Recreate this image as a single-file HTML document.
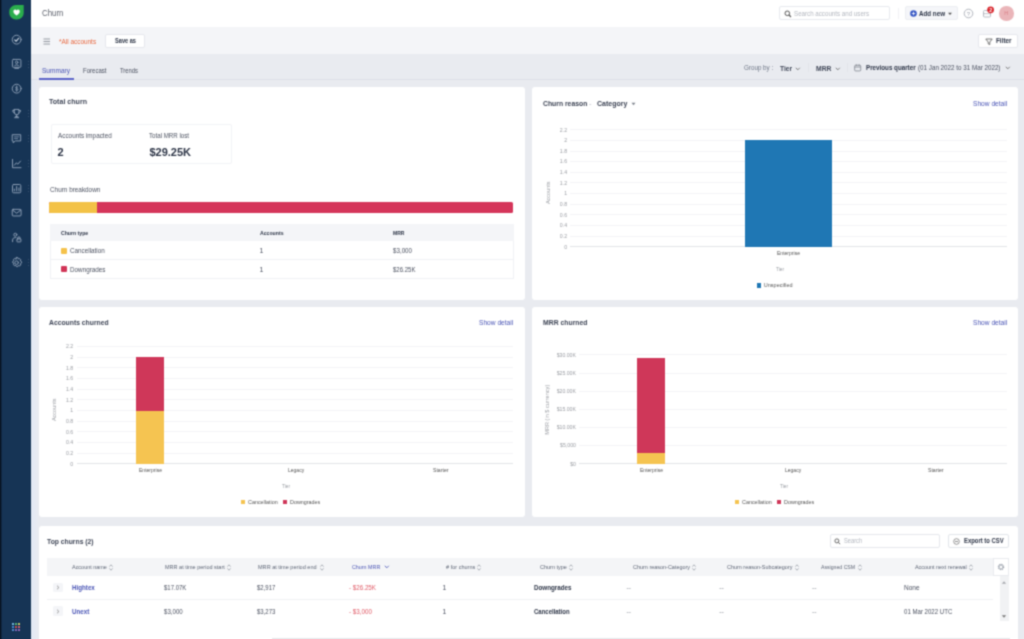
<!DOCTYPE html>
<html><head><meta charset="utf-8">
<style>
*{box-sizing:border-box;margin:0;padding:0}
html,body{width:1024px;height:639px;overflow:hidden;background:#e9ebf0;font-family:"Liberation Sans",sans-serif;color:#2b3345}
.a{position:absolute}
.t{position:absolute;white-space:nowrap;line-height:1;transform-origin:0 50%}
svg{overflow:visible}
body{filter:url(#bl)}
</style></head><body>
<svg width="0" height="0" style="position:absolute"><filter id="bl" x="0" y="0" width="100%" height="100%" color-interpolation-filters="sRGB"><feConvolveMatrix order="3" kernelMatrix="0.0408 0.1204 0.0408 0.1204 0.3550 0.1204 0.0408 0.1204 0.0408" edgeMode="duplicate" preserveAlpha="true"/></filter></svg>
<div class="a" style="left:0px;top:0px;width:31.3px;height:639px;background:#163455;"></div>
<div class="a" style="left:0px;top:0px;width:2px;height:639px;background:linear-gradient(90deg,#050d18,#0b1c30 60%,#173558);"></div>
<div class="a" style="left:31.3px;top:0px;width:993px;height:27px;background:#fff;"></div>
<div class="a" style="left:31.3px;top:27px;width:993px;height:27px;background:#f4f5f8;"></div>
<div class="a" style="left:31.3px;top:79px;width:993px;height:1px;background:#dde0e7;"></div>
<div class="a" style="left:31.3px;top:80px;width:7.2px;height:559px;background:linear-gradient(90deg,#e2e9f5,#e9ebf1);"></div>
<div class="a" style="left:38.5px;top:87px;width:486px;height:212.7px;background:#fff;border-radius:3px;"></div>
<div class="a" style="left:532px;top:87px;width:486px;height:212.7px;background:#fff;border-radius:3px;"></div>
<div class="a" style="left:38.5px;top:307px;width:486px;height:209.8px;background:#fff;border-radius:3px;"></div>
<div class="a" style="left:532px;top:307px;width:486px;height:209.8px;background:#fff;border-radius:3px;"></div>
<div class="a" style="left:38.5px;top:525.7px;width:979.5px;height:120px;background:#fff;border-radius:3px;"></div>
<div class="t" style="left:42.00px;top:9.00px;font-size:8.5px;color:#5a5f6a;transform:scaleX(0.9243);">Churn</div>
<div class="a" style="left:778.7px;top:6.2px;width:111.6px;height:14.1px;background:#fff;border:1px solid #e8eaef;border-radius:2px;"></div>
<svg class="a" style="left:783.5px;top:9.5px" width="8" height="8" viewBox="0 0 8 8"><circle cx="3.3" cy="3.3" r="2.3" fill="none" stroke="#555" stroke-width="1"/><path d="M5 5 L7 7" stroke="#555" stroke-width="1.1"/></svg>
<div class="t" style="left:793.50px;top:11.00px;font-size:6.5px;color:#b3b7bf;transform:scaleX(0.9521);">Search accounts and users</div>
<div class="a" style="left:897.5px;top:8px;width:1px;height:11px;background:#f1f2f5;"></div>
<div class="a" style="left:905px;top:6.2px;width:52.8px;height:14.1px;background:#f5f6f9;border:1px solid #eceef2;border-radius:2px;"></div>
<svg class="a" style="left:909.5px;top:9.6px" width="7" height="7" viewBox="0 0 7 7"><circle cx="3.5" cy="3.5" r="3.3" fill="#3556c4"/><path d="M3.5 1.8v3.4M1.8 3.5h3.4" stroke="#fff" stroke-width=".8"/></svg>
<div class="t" style="left:919.00px;top:11.00px;font-size:6.8px;color:#2b3345;font-weight:bold;transform:scaleX(0.9177);">Add new</div>
<svg class="a" style="left:947px;top:11.5px" width="6" height="4" viewBox="0 0 6 4"><path d="M1 .8L3 3 5 .8z" fill="#555"/></svg>
<svg class="a" style="left:963px;top:7.5px" width="11" height="11" viewBox="0 0 11 11"><circle cx="5.5" cy="5.5" r="4.3" fill="none" stroke="#9ea3ad" stroke-width=".8"/><text x="5.5" y="7.7" font-size="6" text-anchor="middle" fill="#9ea3ad" font-family="Liberation Sans">?</text></svg>
<svg class="a" style="left:981px;top:5px" width="16" height="16" viewBox="0 0 16 16"><rect x="2.5" y="5.5" width="7" height="6.5" rx="1" fill="none" stroke="#a4a9b2" stroke-width=".8"/><path d="M2.5 8.7h7" stroke="#a4a9b2" stroke-width=".7"/><circle cx="9.6" cy="4.8" r="3.4" fill="#d8232a"/><text x="9.6" y="6.8" font-size="5" font-weight="bold" text-anchor="middle" fill="#fff" font-family="Liberation Sans">2</text></svg>
<div class="a" style="left:999px;top:6px;width:14.5px;height:14.5px;background:#eab5b9;border-radius:50%;"></div>
<div class="t" style="left:1004.21px;top:11.00px;font-size:5.5px;color:#d98088;">H</div>
<svg class="a" style="left:43px;top:37.5px" width="8" height="7" viewBox="0 0 8 7"><path d="M.5 1h6.5M.5 3.5h6.5M.5 6h6.5" stroke="#7b808a" stroke-width=".8"/></svg>
<div class="t" style="left:59.10px;top:39.00px;font-size:6.8px;color:#e8683f;transform:scaleX(0.9438);">*All accounts</div>
<div class="a" style="left:104.5px;top:33.6px;width:40.7px;height:14.1px;background:#fff;border:1px solid #e6e8ed;border-radius:2px;"></div>
<div class="t" style="left:115.10px;top:38.00px;font-size:6.8px;color:#2b3345;font-weight:bold;transform:scaleX(0.8289);">Save as</div>
<div class="a" style="left:978px;top:33.6px;width:39.6px;height:14.1px;background:#fff;border:1px solid #e6e8ed;border-radius:2px;"></div>
<svg class="a" style="left:984.5px;top:37.5px" width="8" height="8" viewBox="0 0 8 8"><path d="M.8 1h6.4L4.8 4v2.6L3.2 5.8V4z" fill="none" stroke="#555" stroke-width=".8" stroke-linejoin="round"/></svg>
<div class="t" style="left:996.00px;top:38.00px;font-size:6.8px;color:#2b3345;font-weight:bold;transform:scaleX(0.9323);">Filter</div>
<div class="t" style="left:42.00px;top:67.00px;font-size:7px;color:#4a55b5;transform:scaleX(0.9349);">Summary</div>
<div class="t" style="left:82.80px;top:67.00px;font-size:7px;color:#4b5160;transform:scaleX(0.8630);">Forecast</div>
<div class="t" style="left:119.80px;top:67.00px;font-size:7px;color:#4b5160;transform:scaleX(0.8362);">Trends</div>
<div class="a" style="left:38.5px;top:78px;width:35px;height:2px;background:#5a63c8;"></div>
<div class="t" style="left:743.80px;top:64.00px;font-size:7px;color:#6f7787;transform:scaleX(0.8934);">Group by :</div>
<div class="t" style="left:780.20px;top:65.00px;font-size:7.5px;color:#3f4657;font-weight:bold;transform:scaleX(0.8884);">Tier</div>
<svg class="a" style="left:795.3px;top:66.5px" width="5.600" height="4" viewBox="0 0 7 5"><path d="M1 1l2.500 2.500L6 1" fill="none" stroke="#666" stroke-width="1.100"/></svg>
<div class="a" style="left:808px;top:63px;width:1px;height:9px;background:#e2e5ea;"></div>
<div class="t" style="left:815.60px;top:65.00px;font-size:7.5px;color:#3f4657;font-weight:bold;transform:scaleX(0.9016);">MRR</div>
<svg class="a" style="left:834.6px;top:66.5px" width="5.600" height="4" viewBox="0 0 7 5"><path d="M1 1l2.500 2.500L6 1" fill="none" stroke="#666" stroke-width="1.100"/></svg>
<div class="a" style="left:847px;top:63px;width:1px;height:9px;background:#e2e5ea;"></div>
<svg class="a" style="left:854px;top:64px" width="7.600" height="7.600" viewBox="0 0 8 8"><rect x=".7" y="1.3" width="6.4" height="6" rx="1" fill="none" stroke="#7b808a" stroke-width=".8"/><path d="M.7 3.2h6.4M2.4 .4v1.6M5.4 .4v1.6" stroke="#7b808a" stroke-width=".8"/></svg>
<div class="t" style="left:866.40px;top:65.00px;font-size:6.8px;color:#2b3345;font-weight:bold;transform:scaleX(0.9178);">Previous quarter</div>
<div class="t" style="left:918.00px;top:65.00px;font-size:6.8px;color:#4b5160;transform:scaleX(0.9208);">(01 Jan 2022 to 31 Mar 2022)</div>
<svg class="a" style="left:1004.5px;top:66px" width="5.600" height="4" viewBox="0 0 7 5"><path d="M1 1l2.500 2.500L6 1" fill="none" stroke="#666" stroke-width="1.100"/></svg>
<div class="t" style="left:49.10px;top:98.00px;font-size:7.5px;color:#3d4455;font-weight:bold;transform:scaleX(0.9435);">Total churn</div>
<div class="a" style="left:50.7px;top:124px;width:181.7px;height:39.7px;border:1px solid #f2f3f6;border-radius:2px;"></div>
<div class="t" style="left:57.50px;top:132.00px;font-size:7px;color:#4b5160;transform:scaleX(0.9080);">Accounts impacted</div>
<div class="t" style="left:57.50px;top:147.00px;font-size:11px;color:#2b3345;font-weight:bold;">2</div>
<div class="t" style="left:149.40px;top:132.00px;font-size:7px;color:#4b5160;transform:scaleX(0.8789);">Total MRR lost</div>
<div class="t" style="left:149.40px;top:147.00px;font-size:11px;color:#2b3345;font-weight:bold;">$29.25K</div>
<div class="t" style="left:49.70px;top:186.00px;font-size:7px;color:#4b5160;transform:scaleX(0.9103);">Churn breakdown</div>
<div class="a" style="left:49.2px;top:201.5px;width:464.3px;height:11px;background:#d5355a;border-radius:1.5px;"></div>
<div class="a" style="left:49.2px;top:201.5px;width:47.6px;height:11px;background:#f3c246;border-radius:1.5px 0 0 1.5px;"></div>
<div class="a" style="left:49.5px;top:224.2px;width:464px;height:55px;border:1px solid #f0f1f5;"></div>
<div class="a" style="left:49.5px;top:224.2px;width:464px;height:17.1px;background:#f4f5f8;"></div>
<div class="t" style="left:61.00px;top:230.00px;font-size:6px;color:#2b3345;font-weight:bold;transform:scaleX(0.8589);">Churn type</div>
<div class="t" style="left:259.50px;top:230.00px;font-size:6px;color:#2b3345;font-weight:bold;transform:scaleX(0.8596);">Accounts</div>
<div class="t" style="left:392.70px;top:230.00px;font-size:6px;color:#2b3345;font-weight:bold;transform:scaleX(0.8416);">MRR</div>
<div class="a" style="left:49.5px;top:259.3px;width:464px;height:1px;background:#f0f1f5;"></div>
<div class="a" style="left:60.6px;top:247.5px;width:6px;height:6px;background:#f5c24b;border-radius:1px;"></div>
<div class="t" style="left:70.20px;top:247.00px;font-size:7px;color:#4b5160;transform:scaleX(0.9007);">Cancellation</div>
<div class="t" style="left:259.50px;top:247.00px;font-size:7px;color:#4b5160;">1</div>
<div class="t" style="left:392.70px;top:247.00px;font-size:7px;color:#4b5160;transform:scaleX(0.8874);">$3,000</div>
<div class="a" style="left:60.6px;top:266.3px;width:6px;height:6px;background:#d13557;border-radius:1px;"></div>
<div class="t" style="left:70.20px;top:266.00px;font-size:7px;color:#4b5160;transform:scaleX(0.9033);">Downgrades</div>
<div class="t" style="left:259.50px;top:266.00px;font-size:7px;color:#4b5160;">1</div>
<div class="t" style="left:392.70px;top:266.00px;font-size:7px;color:#4b5160;transform:scaleX(0.8627);">$26.25K</div>
<div class="t" style="left:542.60px;top:100.00px;font-size:7.5px;color:#3a4152;font-weight:bold;transform:scaleX(0.9086);">Churn reason</div>
<div class="t" style="left:589.00px;top:100.00px;font-size:7.5px;color:#b5b9c2;">-</div>
<div class="t" style="left:597.20px;top:100.00px;font-size:7.5px;color:#3a4152;font-weight:bold;transform:scaleX(0.9320);">Category</div>
<svg class="a" style="left:631px;top:102px" width="5" height="4" viewBox="0 0 5 4"><path d="M.5 .8L2.500 3.200 4.500 .8z" fill="#7b808a"/></svg>
<div class="t" style="left:973.20px;top:100.00px;font-size:7px;color:#4a55b5;transform:scaleX(0.9450);">Show detail</div>
<div class="a" style="left:570.4px;top:246.2px;width:437.0px;height:1px;background:#e2e4e8;"></div>
<div class="t" style="left:564.21px;top:245.00px;font-size:5.2px;color:#9a9da3;">0</div>
<div class="a" style="left:570.4px;top:235.6px;width:437.0px;height:1px;background:#f4f4f6;"></div>
<div class="t" style="left:559.87px;top:234.00px;font-size:5.2px;color:#9a9da3;">0.2</div>
<div class="a" style="left:570.4px;top:224.9px;width:437.0px;height:1px;background:#f4f4f6;"></div>
<div class="t" style="left:559.87px;top:223.00px;font-size:5.2px;color:#9a9da3;">0.4</div>
<div class="a" style="left:570.4px;top:214.3px;width:437.0px;height:1px;background:#f4f4f6;"></div>
<div class="t" style="left:559.87px;top:213.00px;font-size:5.2px;color:#9a9da3;">0.6</div>
<div class="a" style="left:570.4px;top:203.7px;width:437.0px;height:1px;background:#f4f4f6;"></div>
<div class="t" style="left:559.87px;top:202.00px;font-size:5.2px;color:#9a9da3;">0.8</div>
<div class="a" style="left:570.4px;top:193.0px;width:437.0px;height:1px;background:#f4f4f6;"></div>
<div class="t" style="left:564.21px;top:191.00px;font-size:5.2px;color:#9a9da3;">1</div>
<div class="a" style="left:570.4px;top:182.4px;width:437.0px;height:1px;background:#f4f4f6;"></div>
<div class="t" style="left:559.87px;top:181.00px;font-size:5.2px;color:#9a9da3;">1.2</div>
<div class="a" style="left:570.4px;top:171.7px;width:437.0px;height:1px;background:#f4f4f6;"></div>
<div class="t" style="left:559.87px;top:170.00px;font-size:5.2px;color:#9a9da3;">1.4</div>
<div class="a" style="left:570.4px;top:161.1px;width:437.0px;height:1px;background:#f4f4f6;"></div>
<div class="t" style="left:559.87px;top:159.00px;font-size:5.2px;color:#9a9da3;">1.6</div>
<div class="a" style="left:570.4px;top:150.5px;width:437.0px;height:1px;background:#f4f4f6;"></div>
<div class="t" style="left:559.87px;top:149.00px;font-size:5.2px;color:#9a9da3;">1.8</div>
<div class="a" style="left:570.4px;top:139.8px;width:437.0px;height:1px;background:#f4f4f6;"></div>
<div class="t" style="left:564.21px;top:138.00px;font-size:5.2px;color:#9a9da3;">2</div>
<div class="a" style="left:570.4px;top:129.2px;width:437.0px;height:1px;background:#f4f4f6;"></div>
<div class="t" style="left:559.87px;top:128.00px;font-size:5.2px;color:#9a9da3;">2.2</div>
<div class="t" style="left:537.49px;top:189.95px;font-size:5.5px;color:#9a9da3;transform:rotate(-90deg) scaleX(1.003);transform-origin:50% 50%">Accounts</div>
<div class="a" style="left:745.3px;top:140.3px;width:86.7px;height:106.4px;background:#1f77b4;"></div>
<div class="t" style="left:777.00px;top:251.00px;font-size:5.2px;color:#555;transform:scaleX(0.9704);">Enterprise</div>
<div class="t" style="left:775.75px;top:267.00px;font-size:5.2px;color:#9a9da3;transform:scaleX(0.9244);">Tier</div>
<div class="a" style="left:756.6px;top:283px;width:4.5px;height:4.5px;background:#1f77b4;"></div>
<div class="t" style="left:763.80px;top:283.00px;font-size:5.5px;color:#555;">Unspecified</div>
<div class="t" style="left:49.10px;top:319.00px;font-size:7.5px;color:#3d4455;font-weight:bold;transform:scaleX(0.9052);">Accounts churned</div>
<div class="t" style="left:479.20px;top:319.00px;font-size:7px;color:#4a55b5;transform:scaleX(0.9450);">Show detail</div>
<div class="a" style="left:77px;top:463.2px;width:436.4px;height:1px;background:#e2e4e8;"></div>
<div class="t" style="left:70.31px;top:462.00px;font-size:5.2px;color:#9a9da3;">0</div>
<div class="a" style="left:77px;top:452.6px;width:436.4px;height:1px;background:#f4f4f6;"></div>
<div class="t" style="left:65.97px;top:451.00px;font-size:5.2px;color:#9a9da3;">0.2</div>
<div class="a" style="left:77px;top:441.9px;width:436.4px;height:1px;background:#f4f4f6;"></div>
<div class="t" style="left:65.97px;top:440.00px;font-size:5.2px;color:#9a9da3;">0.4</div>
<div class="a" style="left:77px;top:431.3px;width:436.4px;height:1px;background:#f4f4f6;"></div>
<div class="t" style="left:65.97px;top:430.00px;font-size:5.2px;color:#9a9da3;">0.6</div>
<div class="a" style="left:77px;top:420.6px;width:436.4px;height:1px;background:#f4f4f6;"></div>
<div class="t" style="left:65.97px;top:419.00px;font-size:5.2px;color:#9a9da3;">0.8</div>
<div class="a" style="left:77px;top:410.0px;width:436.4px;height:1px;background:#f4f4f6;"></div>
<div class="t" style="left:70.31px;top:408.00px;font-size:5.2px;color:#9a9da3;">1</div>
<div class="a" style="left:77px;top:399.3px;width:436.4px;height:1px;background:#f4f4f6;"></div>
<div class="t" style="left:65.97px;top:398.00px;font-size:5.2px;color:#9a9da3;">1.2</div>
<div class="a" style="left:77px;top:388.7px;width:436.4px;height:1px;background:#f4f4f6;"></div>
<div class="t" style="left:65.97px;top:387.00px;font-size:5.2px;color:#9a9da3;">1.4</div>
<div class="a" style="left:77px;top:378.0px;width:436.4px;height:1px;background:#f4f4f6;"></div>
<div class="t" style="left:65.97px;top:376.00px;font-size:5.2px;color:#9a9da3;">1.6</div>
<div class="a" style="left:77px;top:367.4px;width:436.4px;height:1px;background:#f4f4f6;"></div>
<div class="t" style="left:65.97px;top:366.00px;font-size:5.2px;color:#9a9da3;">1.8</div>
<div class="a" style="left:77px;top:356.7px;width:436.4px;height:1px;background:#f4f4f6;"></div>
<div class="t" style="left:70.31px;top:355.00px;font-size:5.2px;color:#9a9da3;">2</div>
<div class="a" style="left:77px;top:346.1px;width:436.4px;height:1px;background:#f4f4f6;"></div>
<div class="t" style="left:65.97px;top:344.00px;font-size:5.2px;color:#9a9da3;">2.2</div>
<div class="t" style="left:43.29px;top:406.90px;font-size:5.5px;color:#9a9da3;transform:rotate(-90deg) scaleX(1.003);transform-origin:50% 50%">Accounts</div>
<div class="a" style="left:135.9px;top:357.3px;width:28.5px;height:53.3px;background:#cf3759;"></div>
<div class="a" style="left:135.9px;top:410.6px;width:28.5px;height:53.1px;background:#f5c451;"></div>
<div class="t" style="left:138.80px;top:468.00px;font-size:5.2px;color:#555;transform:scaleX(0.9704);">Enterprise</div>
<div class="t" style="left:287.80px;top:468.00px;font-size:5.2px;color:#555;transform:scaleX(0.9661);">Legacy</div>
<div class="t" style="left:433.25px;top:468.00px;font-size:5.2px;color:#555;transform:scaleX(0.9932);">Starter</div>
<div class="t" style="left:282.05px;top:484.00px;font-size:5.2px;color:#9a9da3;transform:scaleX(0.9244);">Tier</div>
<div class="a" style="left:241px;top:500px;width:4.4px;height:4.4px;background:#f5c451;"></div>
<div class="t" style="left:248.40px;top:500.00px;font-size:5.5px;color:#555;transform:scaleX(0.9812);">Cancellation</div>
<div class="a" style="left:282.8px;top:500px;width:4.4px;height:4.4px;background:#cf3759;"></div>
<div class="t" style="left:290.00px;top:500.00px;font-size:5.5px;color:#555;transform:scaleX(0.9812);">Downgrades</div>
<div class="t" style="left:543.20px;top:319.00px;font-size:7.5px;color:#3d4455;font-weight:bold;transform:scaleX(0.9128);">MRR churned</div>
<div class="t" style="left:973.20px;top:319.00px;font-size:7px;color:#4a55b5;transform:scaleX(0.9450);">Show detail</div>
<div class="a" style="left:579px;top:463.2px;width:428.4px;height:1px;background:#e2e4e8;"></div>
<div class="t" style="left:570.22px;top:462.00px;font-size:5.2px;color:#9a9da3;">$0</div>
<div class="a" style="left:579px;top:445.1px;width:428.4px;height:1px;background:#f4f4f6;"></div>
<div class="t" style="left:560.09px;top:443.00px;font-size:5.2px;color:#9a9da3;">$5,000</div>
<div class="a" style="left:579px;top:426.9px;width:428.4px;height:1px;background:#f4f4f6;"></div>
<div class="t" style="left:556.63px;top:425.00px;font-size:5.2px;color:#9a9da3;">$10.00K</div>
<div class="a" style="left:579px;top:408.8px;width:428.4px;height:1px;background:#f4f4f6;"></div>
<div class="t" style="left:556.63px;top:407.00px;font-size:5.2px;color:#9a9da3;">$15.00K</div>
<div class="a" style="left:579px;top:390.7px;width:428.4px;height:1px;background:#f4f4f6;"></div>
<div class="t" style="left:556.63px;top:389.00px;font-size:5.2px;color:#9a9da3;">$20.00K</div>
<div class="a" style="left:579px;top:372.6px;width:428.4px;height:1px;background:#f4f4f6;"></div>
<div class="t" style="left:556.63px;top:371.00px;font-size:5.2px;color:#9a9da3;">$25.00K</div>
<div class="a" style="left:579px;top:354.4px;width:428.4px;height:1px;background:#f4f4f6;"></div>
<div class="t" style="left:556.63px;top:353.00px;font-size:5.2px;color:#9a9da3;">$30.00K</div>
<div class="t" style="left:522.60px;top:406.75px;font-size:5.5px;color:#9a9da3;transform:rotate(-90deg) scaleX(1.016);transform-origin:50% 50%">MRR (in $ currency)</div>
<div class="a" style="left:637px;top:357.7px;width:27.9px;height:95.1px;background:#cf3759;"></div>
<div class="a" style="left:637px;top:452.8px;width:27.9px;height:10.9px;background:#f5c451;"></div>
<div class="t" style="left:639.50px;top:468.00px;font-size:5.2px;color:#555;transform:scaleX(0.9704);">Enterprise</div>
<div class="t" style="left:784.90px;top:468.00px;font-size:5.2px;color:#555;transform:scaleX(0.9661);">Legacy</div>
<div class="t" style="left:927.85px;top:468.00px;font-size:5.2px;color:#555;transform:scaleX(0.9932);">Starter</div>
<div class="t" style="left:780.05px;top:484.00px;font-size:5.2px;color:#9a9da3;transform:scaleX(0.9244);">Tier</div>
<div class="a" style="left:734.6px;top:500px;width:4.4px;height:4.4px;background:#f5c451;"></div>
<div class="t" style="left:742.30px;top:500.00px;font-size:5.5px;color:#555;transform:scaleX(0.9812);">Cancellation</div>
<div class="a" style="left:776.6px;top:500px;width:4.4px;height:4.4px;background:#cf3759;"></div>
<div class="t" style="left:783.80px;top:500.00px;font-size:5.5px;color:#555;transform:scaleX(0.9812);">Downgrades</div>
<div class="t" style="left:46.50px;top:538.00px;font-size:7.5px;color:#3d4455;font-weight:bold;transform:scaleX(0.9044);">Top churns (2)</div>
<div class="a" style="left:829.7px;top:534px;width:110.3px;height:14px;background:#fff;border:1px solid #e5e8ed;border-radius:2px;"></div>
<svg class="a" style="left:834px;top:537.5px" width="7" height="7" viewBox="0 0 8 8"><circle cx="3.3" cy="3.3" r="2.3" fill="none" stroke="#555" stroke-width="1"/><path d="M5 5 L7 7" stroke="#555" stroke-width="1.1"/></svg>
<div class="t" style="left:844.30px;top:538.00px;font-size:6.5px;color:#b3b7bf;transform:scaleX(0.8788);">Search</div>
<div class="a" style="left:948px;top:534px;width:60.7px;height:14px;background:#fff;border:1px solid #e3e6eb;border-radius:2px;"></div>
<svg class="a" style="left:952.5px;top:537.5px" width="7" height="7" viewBox="0 0 7 7"><circle cx="3.5" cy="3.5" r="2.8" fill="none" stroke="#777" stroke-width=".8"/><path d="M2 3.5h3" stroke="#777" stroke-width=".8"/></svg>
<div class="t" style="left:964.40px;top:538.00px;font-size:6.8px;color:#2b3345;font-weight:bold;transform:scaleX(0.8662);">Export to CSV</div>
<div class="a" style="left:46.7px;top:557.8px;width:946px;height:18px;background:#f4f5f7;"></div>
<div class="a" style="left:272px;top:638px;width:738px;height:1px;background:#e6e7ea;"></div>
<div class="t" style="left:71.50px;top:564.00px;font-size:6px;color:#5d6575;transform:scaleX(0.9099);">Account name</div>
<svg class="a" style="left:108.7px;top:563.7px" width="4" height="7" viewBox="0 0 4 7"><path d="M.4 2.6L2 .8l1.6 1.8M.4 4.4L2 6.2l1.6-1.8" fill="none" stroke="#8a8f99" stroke-width=".7"/></svg>
<div class="t" style="left:165.00px;top:564.00px;font-size:6px;color:#5d6575;transform:scaleX(0.9197);">MRR at time period start</div>
<svg class="a" style="left:227.3px;top:563.7px" width="4" height="7" viewBox="0 0 4 7"><path d="M.4 2.6L2 .8l1.6 1.8M.4 4.4L2 6.2l1.6-1.8" fill="none" stroke="#8a8f99" stroke-width=".7"/></svg>
<div class="t" style="left:258.00px;top:564.00px;font-size:6px;color:#5d6575;transform:scaleX(0.9248);">MRR at time period end</div>
<svg class="a" style="left:319.5px;top:563.7px" width="4" height="7" viewBox="0 0 4 7"><path d="M.4 2.6L2 .8l1.6 1.8M.4 4.4L2 6.2l1.6-1.8" fill="none" stroke="#8a8f99" stroke-width=".7"/></svg>
<div class="t" style="left:352.30px;top:564.00px;font-size:6px;color:#4a55b5;transform:scaleX(0.8935);">Churn MRR</div>
<svg class="a" style="left:384px;top:565px" width="5.600" height="4" viewBox="0 0 7 5"><path d="M1 1l2.500 2.500L6 1" fill="none" stroke="#4a55b5" stroke-width="1.100"/></svg>
<div class="t" style="left:445.50px;top:564.00px;font-size:6px;color:#5d6575;transform:scaleX(0.9248);"># for churns</div>
<svg class="a" style="left:477.2px;top:563.7px" width="4" height="7" viewBox="0 0 4 7"><path d="M.4 2.6L2 .8l1.6 1.8M.4 4.4L2 6.2l1.6-1.8" fill="none" stroke="#8a8f99" stroke-width=".7"/></svg>
<div class="t" style="left:539.60px;top:564.00px;font-size:6px;color:#5d6575;transform:scaleX(0.9165);">Churn type</div>
<svg class="a" style="left:568.9px;top:563.7px" width="4" height="7" viewBox="0 0 4 7"><path d="M.4 2.6L2 .8l1.6 1.8M.4 4.4L2 6.2l1.6-1.8" fill="none" stroke="#8a8f99" stroke-width=".7"/></svg>
<div class="t" style="left:632.90px;top:564.00px;font-size:6px;color:#5d6575;transform:scaleX(0.9107);">Churn reason-Category</div>
<svg class="a" style="left:692.4px;top:563.7px" width="4" height="7" viewBox="0 0 4 7"><path d="M.4 2.6L2 .8l1.6 1.8M.4 4.4L2 6.2l1.6-1.8" fill="none" stroke="#8a8f99" stroke-width=".7"/></svg>
<div class="t" style="left:726.60px;top:564.00px;font-size:6px;color:#5d6575;transform:scaleX(0.9078);">Churn reason-Subcategory</div>
<svg class="a" style="left:794.5px;top:563.7px" width="4" height="7" viewBox="0 0 4 7"><path d="M.4 2.6L2 .8l1.6 1.8M.4 4.4L2 6.2l1.6-1.8" fill="none" stroke="#8a8f99" stroke-width=".7"/></svg>
<div class="t" style="left:820.90px;top:564.00px;font-size:6px;color:#5d6575;transform:scaleX(0.8593);">Assigned CSM</div>
<svg class="a" style="left:858px;top:563.7px" width="4" height="7" viewBox="0 0 4 7"><path d="M.4 2.6L2 .8l1.6 1.8M.4 4.4L2 6.2l1.6-1.8" fill="none" stroke="#8a8f99" stroke-width=".7"/></svg>
<div class="t" style="left:914.60px;top:564.00px;font-size:6px;color:#5d6575;transform:scaleX(0.9030);">Account next renewal</div>
<svg class="a" style="left:968.8px;top:563.7px" width="4" height="7" viewBox="0 0 4 7"><path d="M.4 2.6L2 .8l1.6 1.8M.4 4.4L2 6.2l1.6-1.8" fill="none" stroke="#8a8f99" stroke-width=".7"/></svg>
<div class="a" style="left:992.6px;top:558.3px;width:16.1px;height:17.4px;background:#fff;border:1px solid #e9ebef;"></div>
<svg class="a" style="left:996.7px;top:563px" width="8" height="8" viewBox="0 0 8 8"><circle cx="4" cy="4" r="2.6" fill="none" stroke="#9aa0ab" stroke-width="1.3" stroke-dasharray="1.2 .85"/><circle cx="4" cy="4" r="1.9" fill="none" stroke="#9aa0ab" stroke-width=".7"/></svg>
<div class="a" style="left:1000.1px;top:575.7px;width:8.6px;height:45.8px;background:#f1f2f4;"></div>
<svg class="a" style="left:1001.4px;top:580px" width="6" height="5" viewBox="0 0 7 5"><path d="M3.5 1L6 4H1z" fill="#a5a8ad"/></svg>
<svg class="a" style="left:1001.4px;top:614px" width="6" height="5" viewBox="0 0 7 5"><path d="M3.5 4L6 1H1z" fill="#777"/></svg>
<div class="a" style="left:46.7px;top:598.8px;width:946px;height:1px;background:#f0f1f4;"></div>
<div class="a" style="left:52.5px;top:582.9000000000001px;width:10.5px;height:9.6px;background:#f4f5f8;border-radius:1.5px;"></div>
<svg class="a" style="left:56px;top:585.2px" width="4" height="5" viewBox="0 0 4 5"><path d="M1 .7L2.9 2.5 1 4.3" fill="none" stroke="#777" stroke-width=".7"/></svg>
<div class="t" style="left:71.50px;top:585.00px;font-size:6.8px;color:#4a55b5;font-weight:bold;transform:scaleX(0.9143);">Hightex</div>
<div class="t" style="left:163.90px;top:585.00px;font-size:6.8px;color:#4b5160;transform:scaleX(0.8802);">$17.07K</div>
<div class="t" style="left:256.60px;top:585.00px;font-size:6.8px;color:#4b5160;transform:scaleX(0.8847);">$2,917</div>
<div class="t" style="left:348.50px;top:585.00px;font-size:6.8px;color:#e05a66;transform:scaleX(0.9156);">- $26.25K</div>
<div class="t" style="left:442.60px;top:585.00px;font-size:6.8px;color:#4b5160;">1</div>
<div class="t" style="left:533.80px;top:585.00px;font-size:6.8px;color:#2b3345;font-weight:bold;transform:scaleX(0.9214);">Downgrades</div>
<div class="t" style="left:626.50px;top:585.00px;font-size:6.8px;color:#8a8f99;">--</div>
<div class="t" style="left:719.30px;top:585.00px;font-size:6.8px;color:#8a8f99;">--</div>
<div class="t" style="left:812.00px;top:585.00px;font-size:6.8px;color:#8a8f99;">--</div>
<div class="t" style="left:903.90px;top:585.00px;font-size:6.8px;color:#4b5160;transform:scaleX(0.9596);">None</div>
<div class="a" style="left:52.5px;top:606.3000000000001px;width:10.5px;height:9.6px;background:#f4f5f8;border-radius:1.5px;"></div>
<svg class="a" style="left:56px;top:608.6px" width="4" height="5" viewBox="0 0 4 5"><path d="M1 .7L2.9 2.5 1 4.3" fill="none" stroke="#777" stroke-width=".7"/></svg>
<div class="t" style="left:71.50px;top:609.00px;font-size:6.8px;color:#4a55b5;font-weight:bold;transform:scaleX(0.9210);">Unext</div>
<div class="t" style="left:163.90px;top:609.00px;font-size:6.8px;color:#4b5160;transform:scaleX(0.8991);">$3,000</div>
<div class="t" style="left:256.60px;top:609.00px;font-size:6.8px;color:#4b5160;transform:scaleX(0.8847);">$3,273</div>
<div class="t" style="left:348.50px;top:609.00px;font-size:6.8px;color:#e05a66;transform:scaleX(0.9217);">- $3,000</div>
<div class="t" style="left:442.60px;top:609.00px;font-size:6.8px;color:#4b5160;">1</div>
<div class="t" style="left:533.80px;top:609.00px;font-size:6.8px;color:#2b3345;font-weight:bold;transform:scaleX(0.8805);">Cancellation</div>
<div class="t" style="left:626.50px;top:609.00px;font-size:6.8px;color:#8a8f99;">--</div>
<div class="t" style="left:719.30px;top:609.00px;font-size:6.8px;color:#8a8f99;">--</div>
<div class="t" style="left:812.00px;top:609.00px;font-size:6.8px;color:#8a8f99;">--</div>
<div class="t" style="left:903.90px;top:609.00px;font-size:6.8px;color:#4b5160;transform:scaleX(0.8937);">01 Mar 2022 UTC</div>
<svg class="a" style="left:9.1px;top:5.4px" width="15" height="14.4" viewBox="0 0 15 15"><path d="M7 0H15V8C15 11.900 11.900 15 8 15H7C3.100 15 0 11.900 0 8V7C0 3.100 3.100 0 7 0Z" fill="#2bae4d"/><path d="M7.600 10.900C4.800 8.900 4.300 7.700 4.300 6.700c0-1.100.8-1.900 1.800-1.900.6 0 1.200.3 1.500.9.300-.6.900-.9 1.500-.9 1 0 1.800.8 1.800 1.900 0 1-.5 2.200-3.300 4.200z" fill="#fff"/></svg>
<svg class="a" style="left:11.249999999999998px;top:33.85px" width="11.3" height="11.3" viewBox="0 0 12 12" fill="none" stroke="#8fa1b8" stroke-width="1" stroke-linecap="round" stroke-linejoin="round"><circle cx="6" cy="6" r="4.7"/><path d="M3.9 6.2l1.5 1.5 2.9-3.2" stroke="#c5d0dd" stroke-width="1.2"/></svg>
<svg class="a" style="left:11.249999999999998px;top:58.449999999999996px" width="11.3" height="11.3" viewBox="0 0 12 12" fill="none" stroke="#8fa1b8" stroke-width="1" stroke-linecap="round" stroke-linejoin="round"><rect x="1.5" y="1.5" width="9" height="8.4" rx="1"/><circle cx="6" cy="4.6" r="1.3"/><path d="M3.6 8.3c.4-1.4 4.4-1.4 4.8 0M4 11h4"/></svg>
<svg class="a" style="left:11.249999999999998px;top:83.14999999999999px" width="11.3" height="11.3" viewBox="0 0 12 12" fill="none" stroke="#8fa1b8" stroke-width="1" stroke-linecap="round" stroke-linejoin="round"><circle cx="6" cy="6" r="4.7"/><path d="M7.4 4.6c-.3-.6-2.6-.8-2.6.4 0 1.300 2.700.6 2.700 2 0 1.200-2.400 1.100-2.900.3M6 3.200v5.600" stroke-width=".8"/></svg>
<svg class="a" style="left:11.249999999999998px;top:107.85px" width="11.3" height="11.3" viewBox="0 0 12 12" fill="none" stroke="#8fa1b8" stroke-width="1" stroke-linecap="round" stroke-linejoin="round"><path d="M3.5 1.500h5v3.200a2.500 2.500 0 0 1-5 0zM3.500 2.600H1.800c0 1.600.6 2.500 1.900 2.700M8.500 2.600h1.700c0 1.600-.6 2.500-1.900 2.700M6 7.200v2M3.900 10.300h4.200M4.600 9.200h2.800"/></svg>
<svg class="a" style="left:11.249999999999998px;top:132.65px" width="11.3" height="11.3" viewBox="0 0 12 12" fill="none" stroke="#8fa1b8" stroke-width="1" stroke-linecap="round" stroke-linejoin="round"><path d="M1.700 1.800h8.600v6.600H4.600L2.300 10.400V8.400H1.700z"/><path d="M3.700 4.100h4.600M3.700 6h3.400" stroke-width=".8"/></svg>
<svg class="a" style="left:11.249999999999998px;top:157.65px" width="11.3" height="11.3" viewBox="0 0 12 12" fill="none" stroke="#8fa1b8" stroke-width="1" stroke-linecap="round" stroke-linejoin="round"><path d="M1.600 1.500v8.800h9"/><path d="M3.600 7.600l2-2.400 1.700 1.300 2.800-3.200"/></svg>
<svg class="a" style="left:11.249999999999998px;top:182.65px" width="11.3" height="11.3" viewBox="0 0 12 12" fill="none" stroke="#8fa1b8" stroke-width="1" stroke-linecap="round" stroke-linejoin="round"><rect x="1.600" y="1.600" width="8.800" height="8.800" rx="1.200"/><path d="M3.600 8.300V6.400M6 8.300V3.700M8.400 8.300V5.300" /></svg>
<svg class="a" style="left:11.249999999999998px;top:207.35px" width="11.3" height="11.3" viewBox="0 0 12 12" fill="none" stroke="#8fa1b8" stroke-width="1" stroke-linecap="round" stroke-linejoin="round"><rect x="1.300" y="2.500" width="9.400" height="7" rx="1"/><path d="M1.600 3.300L6 6.600l4.400-3.300"/></svg>
<svg class="a" style="left:11.249999999999998px;top:232.04999999999998px" width="11.3" height="11.3" viewBox="0 0 12 12" fill="none" stroke="#8fa1b8" stroke-width="1" stroke-linecap="round" stroke-linejoin="round"><circle cx="4.600" cy="2.900" r="1.600"/><path d="M1.700 10.300V8.500c0-1.500 1.200-2.500 2.700-2.500h.9"/><rect x="6.300" y="7.300" width="4.200" height="3.200" rx=".5"/><path d="M7.200 7.300V6.300a1.200 1.200 0 0 1 2.400 0v1"/></svg>
<svg class="a" style="left:11.249999999999998px;top:256.65000000000003px" width="11.3" height="11.3" viewBox="0 0 12 12" fill="none" stroke="#8fa1b8" stroke-width="1" stroke-linecap="round" stroke-linejoin="round"><g transform="translate(6 6) scale(1.18) translate(-6 -6)"><path d="M6 1.300l1.100.2.500 1.200 1.200-.3.900.9-.4 1.200 1.100.6.100 1.100-1.100.700.3 1.200-.9.800-1.200-.4-.6 1.100H5.900l-.600-1.100-1.200.3-.9-.900.400-1.200-1.100-.6-.100-1.100 1.100-.7-.3-1.200.9-.8 1.200.4z" stroke-width=".85"/><circle cx="6" cy="6" r="1.600" stroke-width=".85"/></g></svg>
<div class="a" style="left:27.7px;top:60.599999999999994px;width:1px;height:1px;background:#34506f"></div><div class="a" style="left:27.7px;top:63.599999999999994px;width:1px;height:1px;background:#34506f"></div><div class="a" style="left:27.7px;top:66.6px;width:1px;height:1px;background:#34506f"></div>
<div class="a" style="left:27.7px;top:110.0px;width:1px;height:1px;background:#34506f"></div><div class="a" style="left:27.7px;top:113.0px;width:1px;height:1px;background:#34506f"></div><div class="a" style="left:27.7px;top:116.0px;width:1px;height:1px;background:#34506f"></div>
<div class="a" style="left:27.7px;top:134.8px;width:1px;height:1px;background:#34506f"></div><div class="a" style="left:27.7px;top:137.8px;width:1px;height:1px;background:#34506f"></div><div class="a" style="left:27.7px;top:140.8px;width:1px;height:1px;background:#34506f"></div>
<div class="a" style="left:27.7px;top:159.8px;width:1px;height:1px;background:#34506f"></div><div class="a" style="left:27.7px;top:162.8px;width:1px;height:1px;background:#34506f"></div><div class="a" style="left:27.7px;top:165.8px;width:1px;height:1px;background:#34506f"></div>
<div class="a" style="left:27.7px;top:184.8px;width:1px;height:1px;background:#34506f"></div><div class="a" style="left:27.7px;top:187.8px;width:1px;height:1px;background:#34506f"></div><div class="a" style="left:27.7px;top:190.8px;width:1px;height:1px;background:#34506f"></div>
<div class="a" style="left:27.7px;top:258.8px;width:1px;height:1px;background:#34506f"></div><div class="a" style="left:27.7px;top:261.8px;width:1px;height:1px;background:#34506f"></div><div class="a" style="left:27.7px;top:264.8px;width:1px;height:1px;background:#34506f"></div>
<div class="a" style="left:11.9px;top:622.6px;width:2px;height:2px;border-radius:.5px;background:#7cc4ea"></div>
<div class="a" style="left:14.9px;top:622.6px;width:2px;height:2px;border-radius:.5px;background:#5fbf77"></div>
<div class="a" style="left:17.9px;top:622.6px;width:2px;height:2px;border-radius:.5px;background:#d9d56a"></div>
<div class="a" style="left:11.9px;top:625.6px;width:2px;height:2px;border-radius:.5px;background:#4a90d9"></div>
<div class="a" style="left:14.9px;top:625.6px;width:2px;height:2px;border-radius:.5px;background:#d9534f"></div>
<div class="a" style="left:17.9px;top:625.6px;width:2px;height:2px;border-radius:.5px;background:#e0627a"></div>
<div class="a" style="left:11.9px;top:628.6px;width:2px;height:2px;border-radius:.5px;background:#5a8fd6"></div>
<div class="a" style="left:14.9px;top:628.6px;width:2px;height:2px;border-radius:.5px;background:#8b6bc4"></div>
<div class="a" style="left:17.9px;top:628.6px;width:2px;height:2px;border-radius:.5px;background:#a06bc0"></div>
</body></html>
